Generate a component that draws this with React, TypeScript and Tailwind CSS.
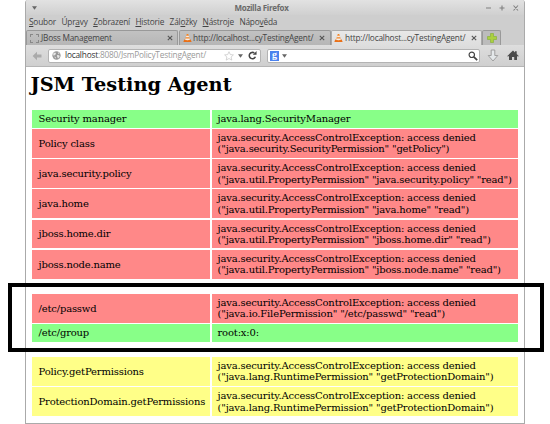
import React from "react";

type Row = { name: string; lines: string[]; tone: "green" | "red" | "yellow" };

const tones = { green: "bg-[#88ff88]", red: "bg-[#ff8888]", yellow: "bg-[#ffff88]" };
const denied = "java.security.AccessControlException: access denied";

const system: Row[] = [
  { name: "Security manager", lines: ["java.lang.SecurityManager"], tone: "green" },
  { name: "Policy class", lines: [denied, '("java.security.SecurityPermission" "getPolicy")'], tone: "red" },
  { name: "java.security.policy", lines: [denied, '("java.util.PropertyPermission" "java.security.policy" "read")'], tone: "red" },
  { name: "java.home", lines: [denied, '("java.util.PropertyPermission" "java.home" "read")'], tone: "red" },
  { name: "jboss.home.dir", lines: [denied, '("java.util.PropertyPermission" "jboss.home.dir" "read")'], tone: "red" },
  { name: "jboss.node.name", lines: [denied, '("java.util.PropertyPermission" "jboss.node.name" "read")'], tone: "red" },
];
const files: Row[] = [
  { name: "/etc/passwd", lines: [denied, '("java.io.FilePermission" "/etc/passwd" "read")'], tone: "red" },
  { name: "/etc/group", lines: ["root:x:0:"], tone: "green" },
];
const domains: Row[] = [
  { name: "Policy.getPermissions", lines: [denied, '("java.lang.RuntimePermission" "getProtectionDomain")'], tone: "yellow" },
  { name: "ProtectionDomain.getPermissions", lines: [denied, '("java.lang.RuntimePermission" "getProtectionDomain")'], tone: "yellow" },
];

function Results({ rows }: { rows: Row[] }) {
  return (
    <div className="flex w-[486px] flex-col gap-[1.4px] font-['DejaVu_Serif',serif] text-[10px] leading-[11.4px] tracking-[-0.175px] text-black">
      {rows.map((r) => (
        <div key={r.name} className={`flex gap-[1.5px] whitespace-nowrap ${r.lines.length > 1 ? "h-[28.8px]" : "h-[17.5px]"}`}>
          <div className={`flex w-[178px] shrink-0 items-center pl-[6.5px] ${tones[r.tone]}`}>{r.name}</div>
          <div className={`flex grow flex-col justify-center pl-[6px] ${tones[r.tone]}`}>
            {r.lines.map((l) => <div key={l}>{l}</div>)}
          </div>
        </div>
      ))}
    </div>
  );
}

function Cone() {
  return (
    <svg viewBox="0 0 10 10" className="h-[10px] w-[9px] shrink-0">
      <path d="M1.4 6.6h7.2l1 2.9H.4z" fill="#e8701a" />
      <path d="M4.2.5h1.6l2 6.8q-2.8 1.2-5.6 0z" fill="#f58220" />
      <path d="M3.7 2.4h2.6l.5 1.7H3.2zM2.7 5.6h4.6l.4 1.3q-2.7 1-5.4 0z" fill="#f3eee8" />
    </svg>
  );
}

function Close() {
  return (
    <svg viewBox="0 0 6 6" className="h-[6px] w-[6px] shrink-0">
      <path d="M.8.8l4.4 4.4M5.2.8L.8 5.2" stroke="#555" strokeWidth="1.1" />
    </svg>
  );
}

function Down() {
  return <svg viewBox="0 0 6 4" className="h-[4px] w-[5px] shrink-0"><path d="M0 0h6L3 4z" fill="#666" /></svg>;
}

const menus = [["", "S", "oubor"], ["Úpr", "a", "vy"], ["", "Z", "obrazení"], ["", "H", "istorie"], ["Zál", "o", "žky"], ["", "N", "ástroje"], ["Nápo", "v", "ěda"]];

function Chrome() {
  return (
    <div className="h-[67px] shrink-0 rounded-t-[3px] bg-[#cecece] font-['Open_Sans','Noto_Sans',sans-serif] text-[8.3px] tracking-[-0.2px] text-[#444]">
      <div className="flex h-[15px] items-center rounded-t-[3px] bg-linear-to-b from-[#e2e2e2] to-[#d0d0d0] pr-[5px] pl-[6px]">
        <Down />
        <div className="grow pl-px text-center text-[8px] font-bold tracking-[-0.3px] text-[#6a6a6a]">Mozilla Firefox</div>
        <svg viewBox="0 0 34 8" className="h-[8px] w-[34px]">
          <path d="M1 4h5M14.500 4h5M17 1.500v5M28.500 1.500l4.500 5M33 1.500l-4.500 5" stroke="#808080" strokeWidth="1.1" fill="none" />
        </svg>
      </div>
      <div className="flex h-[14px] items-center gap-[5.5px] pl-[3px] whitespace-nowrap">
        {menus.map(([a, b, c]) => <span key={b + c}>{a}<u>{b}</u>{c}</span>)}
      </div>
      <div className="flex h-[16px] items-end whitespace-nowrap">
        <div className="flex h-[15px] w-[152px] items-center rounded-t-[2px] border border-b-0 border-[#999] bg-linear-to-b from-[#c2c2c2] to-[#b6b6b6] pr-[4px] pl-[3px]">
          <span className="h-[9px] w-[9px] shrink-0 border border-dashed border-[#888]" />
          <span className="grow pl-[2px]">JBoss Management</span><Close />
        </div>
        <div className="ml-px flex h-[15px] w-[152px] items-center rounded-t-[2px] border border-b-0 border-[#999] bg-linear-to-b from-[#c2c2c2] to-[#b6b6b6] pr-[5px] pl-[3px]">
          <Cone /><span className="grow pl-[1px]">http://localhost...cyTestingAgent/</span><Close />
        </div>
        <div className="flex h-[15px] w-[151px] items-center rounded-t-[2px] border border-b-0 border-[#aaa] bg-linear-to-b from-[#e8e8e8] to-[#dedede] pr-[4px] pl-[2px]">
          <Cone /><span className="grow pl-[2px]">http://localhost...cyTestingAgent/</span><Close />
        </div>
        <div className="flex h-[15px] w-[19px] items-center justify-center rounded-t-[2px] border border-b-0 border-[#999] bg-[#bcbcbc]">
          <svg viewBox="0 0 10 10" className="h-[10px] w-[10px]"><path d="M3.5.5h3v3h3v3h-3v3h-3v-3h-3v-3h3z" fill="#abd040" stroke="#8ab33a" strokeWidth=".7" strokeLinejoin="round" /></svg>
        </div>
      </div>
      <div className="flex h-[22px] items-center border-b border-[#b5b5b5] bg-linear-to-b from-[#dedede] to-[#cfcfcf] pl-[6px]">
        <svg viewBox="0 0 10 10" className="h-[10px] w-[10px]"><path d="M5 .8v2.700h4.500v3H5v2.700L.6 5z" fill="#aaa" /></svg>
        <div className="ml-[6px] flex h-[14px] w-[213px] items-center rounded-[2px] border border-[#b3b3b3] bg-white pr-[3px] pl-[3px] whitespace-nowrap">
          <svg viewBox="0 0 10 10" className="h-[9px] w-[9px]">
            <circle cx="5" cy="5" r="4.6" fill="#999" />
            <path d="M1.5 2.5l2-.8 1 1.2-1.2 1.7-2 .4zM5.5 4.5l2.500.2.5 1.600-1.700 2-1-1.500zM6.500 1l2 1.800-1.500.5zM2.500 6l1.800 1-.5 1.600z" fill="#e6e6e6" />
          </svg>
          <span className="grow pl-[4px] text-[#999]"><span className="text-[#333]">localhost</span>:8080/JsmPolicyTestingAgent/</span>
          <svg viewBox="0 0 10 10" className="mr-[4px] h-[10px] w-[10px]"><path d="M5 .7l1.300 2.900 3.100.3L7.100 6l.7 3.100L5 7.500 2.200 9.100l.7-3.100L.6 3.900l3.100-.3z" fill="#fff" stroke="#c4c4c4" strokeWidth=".7" /></svg>
          <Down />
          <svg viewBox="0 0 10 10" className="ml-[5px] h-[9px] w-[9px]"><path d="M8.200 6.300A3.500 3.500 0 1 1 7 2.200" fill="none" stroke="#444" strokeWidth="1.700" /><path d="M5.300 4.300h4.200V.1z" fill="#444" /></svg>
        </div>
        <div className="ml-[6px] flex h-[14px] w-[213px] items-center rounded-[2px] border border-[#b3b3b3] bg-white pr-[1px] pl-[2px]">
          <div className="mr-[3px] flex h-[10px] w-[9px] items-center justify-center bg-[#4a82ee] pb-[2px] font-['Liberation_Serif',serif] text-[10px] leading-none font-bold text-white">g</div>
          <Down />
          <svg viewBox="0 0 10 10" className="ml-auto h-[10px] w-[10px]"><circle cx="3.800" cy="3.800" r="2.700" fill="none" stroke="#444" strokeWidth="1.200" /><path d="M5.800 5.800l3.400 3.400" stroke="#444" strokeWidth="1.700" /></svg>
        </div>
        <svg viewBox="0 0 12 13" className="ml-[7px] h-[13px] w-[12px]"><path d="M4.200 1h3.600v5.500h3L6 12 1.200 6.500h3z" fill="#e4e8ea" stroke="#999" strokeWidth=".9" strokeLinejoin="round" /></svg>
        <svg viewBox="0 0 12 11" className="ml-[8px] h-[11px] w-[12px]"><path d="M6 .5l2 1.900V1.200h1.700V4l2 2-.7.700L10 5.800V10H7.200V7H5v3H2V5.800l-1 .9L.300 6z" fill="#4c4c4c" /></svg>
      </div>
    </div>
  );
}

export default function App() {
  return (
    <div className="relative h-[424px] w-[550px] overflow-hidden bg-white pl-[25px]">
      <div className="flex h-[424px] w-[500px] flex-col rounded-t-[3px] border border-t-0 border-[#aaa] bg-white">
        <Chrome />
        <h1 className="mt-[4px] h-[39.2px] shrink-0 pl-[4.5px] font-['DejaVu_Serif',serif] text-[19.35px] leading-[27px] font-bold whitespace-nowrap text-black">JSM Testing Agent</h1>
        <div className="flex flex-col gap-[15.4px] pl-[6px]">
          <Results rows={system} />
          <Results rows={files} />
          <Results rows={domains} />
        </div>
      </div>
      <div className="absolute top-[283px] left-[8px] h-[69px] w-[536px] border-4 border-black" />
    </div>
  );
}
